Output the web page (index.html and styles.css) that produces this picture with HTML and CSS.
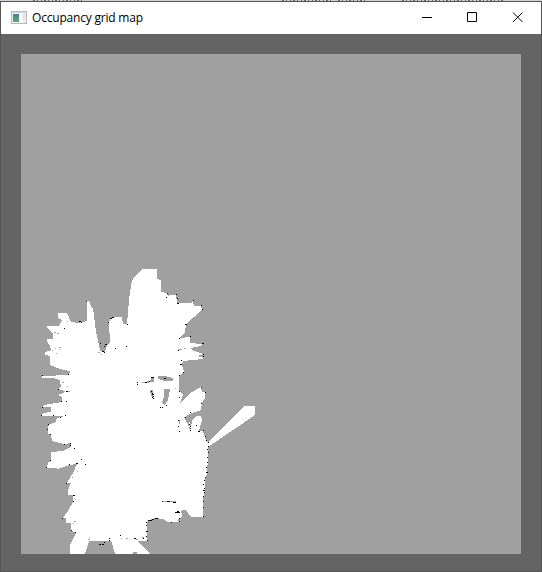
FILE: index.html
```html
<!DOCTYPE html>
<html lang="en">
<head>
<meta charset="utf-8">
<title>Occupancy grid map</title>
<link rel="stylesheet" href="styles.css">
</head>
<body>
<div class="backdrop">
  <svg width="542" height="1" viewBox="0 0 542 1" shape-rendering="crispEdges">
    <path class="scraps" d="M33 .5H84M282 .5H333M338 .5H365M402 .5H504"/>
  </svg>
</div>
<main class="window">
  <header class="titlebar">
    <svg class="app-icon" width="16" height="14" viewBox="0 0 16 14">
      <defs><linearGradient id="pane" x2="0" y2="1"><stop stop-color="#477e9b"/><stop offset="1" stop-color="#60a779"/></linearGradient></defs>
      <rect x=".5" y=".5" width="15" height="12" fill="#f0f1f2" stroke="#b5b9bd"/>
      <path d="M1 1.5H15" stroke="#d5dade"/>
      <rect x="2" y="3" width="6" height="8" fill="url(#pane)"/>
      <rect x="9" y="3" width="3" height="8" fill="#fff"/>
      <path d="M12 3h2v3l-2 4z" fill="#d5dde0"/>
    </svg>
    <h1 class="title">Occupancy grid map</h1>
    <nav class="controls">
      <svg width="11" height="11" viewBox="0 0 11 11"><path d="M0 5.5H10"/></svg>
      <svg width="11" height="11" viewBox="0 0 11 11"><path d="M.5 .5H9.5V9.5H.5Z"/></svg>
      <svg width="11" height="11" viewBox="0 0 11 11"><path d="M1 .5L10.5 10M10.5 .5L1 10"/></svg>
    </nav>
  </header>
  <section class="client">
    <svg class="map" width="500" height="500" viewBox="21 54 500 500" shape-rendering="crispEdges">
      <path class="free" d="M70 554V545L76 533 71 530V523H66V518H63L68 511 73 502V495H68V490L71 483H67L70 478 73 473 77 464 69 465 58 469 55 468H47L48 462 51 461V452L63 451 71 447V443L64 444 52 441 51 435 48 434V428L49 424 55 423 57 418 65 416H42L43 413 51 412V407H42L44 405 62 402V397L58 395 63 393 65 391 58 389 61 387 60 380 53 378H42V376L69 375 70 371 63 370 55 367 50 365V356L45 355V352L51 350 50 346 47 341V339H53V334L47 328V326H59L62 320 58 318V313H67L71 322 78 323 87 321V301L90 302 91 307 93 308 96 332 98 340 100 351 105 352 107 345 110 343 109 323 110 319 113 317H122L123 324H127L129 300 131 285 133 279 138 273 143 269H157V279L161 280V292L167 293 168 297 169 295H176L177 303H190L193 301 194 306H201L202 310 186 324 185 332 179 338 190 337V343L202 344 201 346 190 348 192 350 203 354 198 356 203 358V359L183 361 182 365 184 372 179 376V390L183 395 180 403 192 392 201 387 202 392H205V398L202 403 201 410 190 414 185 417V420H189L191 429 192 420 196 416H201L202 420 199 431H203L206 440 208 443 244 406H255V415L208 447V457L207 473 205 480V492L203 497V517H191L186 510H183L180 512 182 513V517L178 519 179 522H168L163 519 155 518 147 521V541H137L150 554H115L112 543 110 541H89L85 554Z"/>
      <path class="unknown" d="M158 376H165L173 378V381H165L158 379ZM151 377H154V382H146L151 380ZM164 389H170L168 400 165 405 162 403 164 396ZM150 390H153V398L151 395ZM179 420H180V424H179ZM184 417H188L190 430 188 424 186 421ZM133 552H137V554H133Z"/>
      <g class="cells" transform="translate(0 .5)">
        <path class="trace" d="M54 332h2M57 333h2M55 348h1M59 347h2M52 350h1M56 353h1M61 372h4M62 382h2M67 386h1M66 391h4M69 318h1M67 321h1M72 477h1M77 471h1M75 499h1M74 521h2M73 523h1M89 537h1M88 539h2M121 538h1M98 352h2M101 354h1M60 349h1M163 501h12M126 538h2M136 539h2M142 537h2M187 417h2M184 348h2M178 349h4M189 302h3M175 388h1M142 382h7M166 501h10"/>
        <path class="occupied" d="M86 301h1M64 328h1M79 321h2M81 322h1M112 317h2M110 318h2M108 322h1M100 343h1M105 344h2M104 346h1M102 351h2M104 352h1M115 348h1M126 346h1M127 324h1M42 375h1M68 374h1M58 389h1M66 391h2M61 401h1M66 401h1M42 407h1M41 415h1M53 415h1M65 415h1M60 417h1M48 424h1M47 429h1M50 434h1M64 444h1M70 443h1M70 445h1M74 448h1M50 460h1M46 467h1M69 464h1M76 463h2M81 459h1M85 464h1M66 483h1M73 495h2M73 501h1M62 518h1M71 530h1M75 532h1M109 538h1M109 540h1M120 535h1M99 544h2M102 544h2M104 542h1M167 293h1M166 297h1M176 294h1M177 298h1M177 303h2M193 300h1M201 305h1M202 309h1M185 324h2M179 338h1M190 336h1M202 343h1M181 360h1M180 364h2M183 372h1M179 375h1M203 356h1M178 350h1M203 343h1M203 354h1M151 377h3M149 381h1M145 382h2M137 382h1M137 384h1M151 391h1M152 393h1M152 394h2M153 396h1M152 397h1M153 398h1M164 378h2M160 407h1M162 407h1M166 405h1M179 391h1M179 397h1M201 387h1M205 392h1M201 403h1M190 412h1M185 417h1M178 420h1M178 426h1M179 431h1M189 424h1M190 426h1M190 428h1M190 430h1M198 431h2M203 430h1M196 425h1M205 436h1M206 440h1M208 442h1M208 446h1M207 449h1M208 452h1M207 457h1M207 462h1M206 467h1M206 472h2M205 477h1M204 480h1M203 484h1M204 488h1M203 490h2M204 492h1M203 496h1M203 501h1M203 507h1M203 516h1M162 501h1M167 501h3M173 502h3M175 512h5M177 511h2M179 518h1M179 521h1M171 522h1M148 520h4M152 519h2M155 518h3M146 522h1M146 525h1M146 531h2M146 536h1M147 540h1M134 538h2M143 538h1"/>
      </g>
    </svg>
  </section>
</main>
</body>
</html>
```
FILE: styles.css
```css
body {
  margin: 0;
  width: 542px;
  height: 572px;
  overflow: hidden;
  background: #fff;
}

svg {
  display: block;
}

.backdrop {
  height: 1px;
  background: #d3d3d3;
}

.scraps {
  stroke: #666;
  stroke-dasharray: 2 2 1 3 1 2;
}

.window {
  box-sizing: border-box;
  height: 571px;
  border: 1px solid #555;
}

.titlebar {
  display: flex;
  align-items: center;
  height: 32px;
  padding: 0 18px 0 10px;
  background: #fff;
}

.app-icon {
  margin: -1px 5px 0 0;
}

.title {
  margin: 0;
  font: 400 12px/16px "Open Sans", "Noto Sans", sans-serif;
  letter-spacing: -0.2px;
  color: #000;
  white-space: nowrap;
}

.controls {
  display: flex;
  gap: 34px;
  margin: -1px 0 0 auto;
}

.controls path {
  fill: none;
  stroke: #000;
  stroke-width: 1;
}

.client {
  height: 537px;
  box-sizing: border-box;
  padding: 20px;
  background: #646464;
}

.map {
  background: #a0a0a0;
}

.free {
  fill: #fff;
}

.unknown {
  fill: #a0a0a0;
}

.cells path {
  fill: none;
  stroke-width: 1;
}

.cells .trace {
  stroke: #a8a8a8;
}

.cells .occupied {
  stroke: #000;
}
```
